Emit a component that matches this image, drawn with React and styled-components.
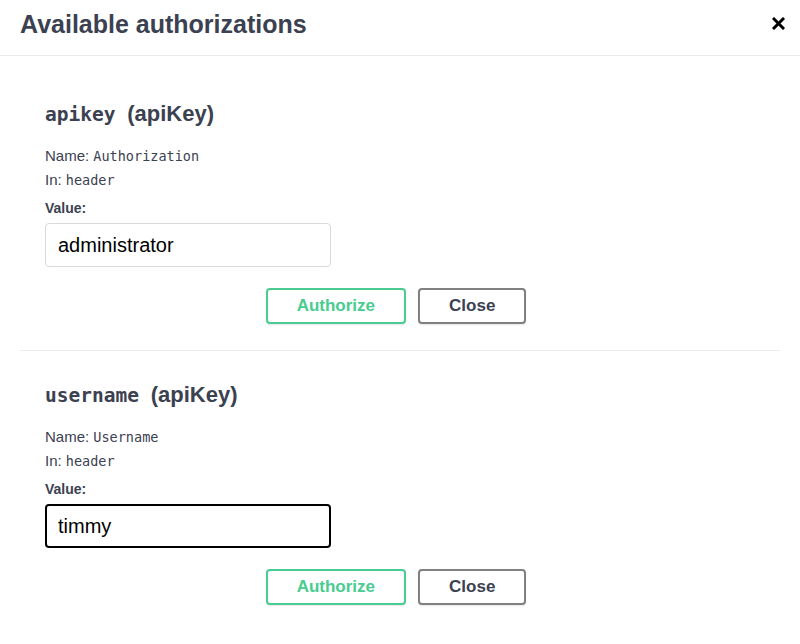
import styled, { createGlobalStyle } from "styled-components";

const GlobalStyle = createGlobalStyle`
    html, body {
        margin: 0;
        padding: 0;
        background: #ffffff;
    }
    body {
        font-family: "Liberation Sans", Arial, sans-serif;
        color: #3b4151;
    }
`;

const schemes = [
    { key: "apikey", name: "Authorization", value: "administrator", focused: false },
    { key: "username", name: "Username", value: "timmy", focused: true },
];

const App = () => {
    return (
        <Modal>
            <GlobalStyle />
            <Header>
                <Title>Available authorizations</Title>
                <CloseIcon aria-label="close">
                    <svg width="13" height="13" viewBox="0 0 13 13">
                        <path d="M2 2 L11 11 M11 2 L2 11" stroke="#000" strokeWidth="3" strokeLinecap="square" />
                    </svg>
                </CloseIcon>
            </Header>
            <Content>
                {schemes.map((s) => (
                    <Section key={s.key}>
                        <SchemeTitle>
                            <Code>{s.key} </Code>(apiKey)
                        </SchemeTitle>
                        <Label>
                            Name: <Mono>{s.name}</Mono>
                        </Label>
                        <Label $last>
                            In: <Mono>header</Mono>
                        </Label>
                        <ValueLabel>Value:</ValueLabel>
                        <Input defaultValue={s.value} $focused={s.focused} />
                        <Buttons>
                            <Button $variant="authorize">Authorize</Button>
                            <Button $variant="close">Close</Button>
                        </Buttons>
                    </Section>
                ))}
            </Content>
        </Modal>
    );
};

const Modal = styled.div`
    width: 800px;
    min-height: 644px;
    background: #fff;
`;

const Header = styled.div`
    display: flex;
    align-items: flex-start;
    justify-content: space-between;
    padding: 9px 15px 16px 20px;
    border-bottom: 1px solid #ebebeb;
`;

const Title = styled.h3`
    margin: 0;
    font-size: 25px;
    line-height: 30px;
    font-weight: 700;
    color: #3b4151;
`;

const CloseIcon = styled.button`
    border: none;
    background: none;
    padding: 0;
    margin-top: 8px;
    width: 13px;
    height: 13px;
    display: flex;
    cursor: pointer;
`;

const Content = styled.div`
    padding: 14px 20px 0;
`;

const Section = styled.div`
    padding: 32px 25px 26px;
    border-bottom: 1px solid #ebebeb;
    &:last-child {
        border-bottom: none;
    }
`;

const SchemeTitle = styled.h4`
    margin: 0 0 19px;
    font-size: 22px;
    line-height: 24px;
    font-weight: 700;
    color: #3b4151;
`;

const Code = styled.code`
    font-family: "DejaVu Sans Mono", monospace;
    font-size: 19.5px;
    font-weight: 700;
`;

const Label = styled.div`
    font-size: 15px;
    line-height: 20px;
    margin-bottom: ${(p) => (p.$last ? "8px" : "4px")};
    color: #3b4151;
`;

const Mono = styled.span`
    font-family: "DejaVu Sans Mono", monospace;
    font-size: 13.5px;
`;

const ValueLabel = styled.div`
    font-size: 14px;
    line-height: 20px;
    font-weight: 700;
    color: #3b4151;
    margin-bottom: 5px;
`;

const Input = styled.input`
    display: block;
    box-sizing: border-box;
    width: 286px;
    height: 44px;
    margin: 0;
    padding: 0 ${(p) => (p.$focused ? "11px" : "12px")};
    border: ${(p) => (p.$focused ? "2px solid #000" : "1px solid #d9d9d9")};
    border-radius: 4px;
    font-family: "Liberation Sans", Arial, sans-serif;
    font-size: 20px;
    color: #000;
    background: #fff;
    outline: none;
`;

const Buttons = styled.div`
    display: flex;
    justify-content: center;
    gap: 12px;
    margin-top: 21px;
    padding-right: 8px;
`;

const Button = styled.button`
    box-sizing: border-box;
    height: 36px;
    padding: 0 29px;
    background: #fff;
    border-radius: 4px;
    font-family: "Liberation Sans", Arial, sans-serif;
    font-size: 17px;
    font-weight: 700;
    cursor: pointer;
    border: 2px solid ${(p) => (p.$variant === "authorize" ? "#49cc90" : "#808080")};
    color: ${(p) => (p.$variant === "authorize" ? "#49cc90" : "#3b4151")};
    box-shadow: 0 1px 2px rgba(0, 0, 0, 0.1);
`;

export default App;
